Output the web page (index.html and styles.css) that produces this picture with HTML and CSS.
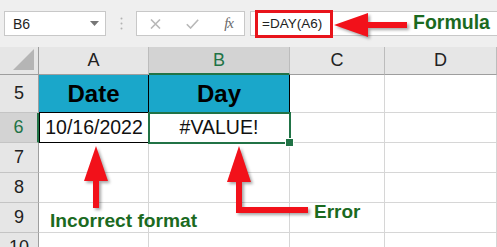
FILE: index.html
```html
<!DOCTYPE html>
<html lang="en">
<head>
    <meta charset="UTF-8">
    <title>DAY function error</title>
    <link rel="stylesheet" href="styles.css">
</head>
<body>
    <div class="sheet">
        <div class="toolbar">
            <div class="namebox">
                <span>B6</span>
                <svg class="drop" width="9" height="5" viewBox="0 0 9 5"><path d="M0 0h9L4.5 5z"/></svg>
            </div>
            <div class="grip">
                <svg width="3" height="13" viewBox="0 0 3 13"><circle cx="1.5" cy="1.5" r="1"/><circle cx="1.5" cy="6.5" r="1"/><circle cx="1.5" cy="11.5" r="1"/></svg>
            </div>
            <div class="fbuttons">
                <svg width="11" height="10" viewBox="0 0 11 10"><path d="M1 0.5l9 9M10 0.5l-9 9"/></svg>
                <svg width="13" height="10" viewBox="0 0 13 10"><path d="M0.8 5.2l3.8 3.8L12.2 0.8"/></svg>
                <span class="fx">fx</span>
            </div>
            <div class="fbar">
                <span class="formula">=DAY(A6)</span>
            </div>
        </div>

        <div class="grid">
            <div class="hd corner">
                <svg width="21" height="21" viewBox="0 0 21 21"><path d="M21 0v21H0z"/></svg>
            </div>
            <div class="hd col">A</div>
            <div class="hd col active">B</div>
            <div class="hd col">C</div>
            <div class="hd col">D</div>

            <div class="hd row">5</div>
            <div class="cell title">Date</div>
            <div class="cell title">Day</div>
            <div class="cell"></div>
            <div class="cell"></div>

            <div class="hd row active">6</div>
            <div class="cell value boxed">10/16/2022</div>
            <div class="cell value selected">#VALUE!</div>
            <div class="cell"></div>
            <div class="cell"></div>

            <div class="hd row">7</div>
            <div class="cell"></div>
            <div class="cell"></div>
            <div class="cell"></div>
            <div class="cell"></div>

            <div class="hd row">8</div>
            <div class="cell"></div>
            <div class="cell"></div>
            <div class="cell"></div>
            <div class="cell"></div>

            <div class="hd row">9</div>
            <div class="cell"></div>
            <div class="cell"></div>
            <div class="cell"></div>
            <div class="cell"></div>

            <div class="hd row">10</div>
            <div class="cell"></div>
            <div class="cell"></div>
            <div class="cell"></div>
            <div class="cell"></div>
        </div>

        <!-- callouts drawn over the sheet -->
        <svg class="arrows" width="497" height="247" viewBox="0 0 497 247">
            <polygon points="96,146 108,181 99,181 99,208 93,208 93,181 84,181"/>
            <polygon points="239,146 251,182 242,182 242,207 308,207 308,213 236,213 236,182 227,182"/>
            <polygon points="334,25 368,13 368,22 407,22 407,28 368,28 368,37"/>
        </svg>
        <span class="note note-formula">Formula</span>
        <span class="note note-format">Incorrect format</span>
        <span class="note note-error">Error</span>
    </div>
</body>
</html>
```

FILE: styles.css
```css
* {
    margin: 0;
    padding: 0;
    box-sizing: border-box;
}

body {
    background: #fff;
    font-family: "Liberation Sans", Arial, sans-serif;
    color: #1e1e1e;
    overflow: hidden;
}

.sheet {
    position: relative;
    width: 497px;
    height: 247px;
    overflow: hidden;
}

/* ---- formula bar ---- */

.toolbar {
    display: flex;
    height: 47px;
    padding-top: 11px;
    background: #efefef;
}

.namebox {
    display: flex;
    align-items: center;
    justify-content: space-between;
    width: 102px;
    height: 25px;
    margin-left: 4px;
    padding: 0 6px 0 8px;
    background: #fff;
    border: 1px solid #c8c8c8;
    font-size: 14px;
}

.namebox .drop {
    fill: #767676;
}

.grip {
    display: flex;
    align-items: center;
    justify-content: center;
    width: 30px;
    height: 25px;
}

.grip svg {
    fill: #b2b2b2;
}

.fbuttons {
    display: flex;
    align-items: center;
    justify-content: space-between;
    width: 109px;
    height: 25px;
    padding: 0 11px 0 13px;
    background: #fff;
    border: 1px solid #c8c8c8;
}

.fbuttons svg {
    fill: none;
    stroke: #b8b8b8;
    stroke-width: 1.6;
}

.fx {
    font-family: "Liberation Serif", serif;
    font-style: italic;
    font-size: 15px;
    color: #6a6a6a;
    letter-spacing: -1px;
}

.fbar {
    display: flex;
    align-items: center;
    flex: 1;
    height: 25px;
    margin-left: 5px;
    padding-left: 4px;
    background: #fff;
    border: 1px solid #c8c8c8;
    border-right: none;
}

.formula {
    display: flex;
    align-items: center;
    width: 78px;
    height: 28px;
    padding-left: 4px;
    border: 3px solid #e8141b;
    font-size: 13.5px;
    color: #222;
}

/* ---- grid ---- */

.grid {
    display: grid;
    grid-template-columns: 39px 110px 141px 95px 112px;
    grid-template-rows: 28px 38px 30px 30px 30px 30px 30px;
}

.hd {
    display: flex;
    align-items: center;
    justify-content: center;
    background: #e6e6e6;
    font-size: 18px;
    color: #222;
}

.hd.col {
    border-right: 1px solid #bcbcbc;
    border-bottom: 1px solid #9e9e9e;
}

.hd.row {
    border-right: 1px solid #9e9e9e;
    border-bottom: 1px solid #c4c4c4;
}

.hd.corner {
    align-items: flex-end;
    justify-content: flex-end;
    padding: 0 4px 4px 0;
    border-right: 1px solid #9e9e9e;
    border-bottom: 1px solid #9e9e9e;
}

.corner svg {
    fill: #b5b5b5;
}

.hd.active {
    background: #d3d3d3;
    color: #217346;
}

.hd.col.active {
    border-bottom: 2px solid #217346;
}

.hd.row.active {
    border-right: 2px solid #217346;
}

.cell {
    display: flex;
    align-items: center;
    justify-content: center;
    border-right: 1px solid #d6d6d6;
    border-bottom: 1px solid #d6d6d6;
    white-space: nowrap;
}

.cell.title {
    background: #1aa7ca;
    border-right: 1px solid #000;
    border-bottom: 1px solid #000;
    font-size: 24px;
    font-weight: bold;
    color: #000;
}

.cell.value {
    font-size: 19.5px;
    color: #111;
}

.cell.boxed {
    border-left: 1px solid #000;
    border-right: 1px solid #000;
    border-bottom: 1px solid #000;
}

.cell.selected {
    position: relative;
}

.cell.selected::before {
    content: "";
    position: absolute;
    top: -1px;
    left: -1px;
    right: -2px;
    bottom: -2px;
    border: 2px solid #217346;
}

.cell.selected::after {
    content: "";
    position: absolute;
    right: -5px;
    bottom: -5px;
    width: 7px;
    height: 7px;
    background: #217346;
    border: 1px solid #fff;
}

/* ---- callouts ---- */

.arrows {
    position: absolute;
    top: 0;
    left: 0;
    fill: #f2111a;
    filter: drop-shadow(2px 2px 1.5px rgba(0, 0, 0, 0.35));
    pointer-events: none;
}

.note {
    position: absolute;
    font-weight: bold;
    line-height: 1;
    color: #1b6a1f;
    white-space: nowrap;
}

.note-formula {
    top: 13px;
    left: 413px;
    font-size: 19.5px;
}

.note-format {
    top: 211px;
    left: 50px;
    font-size: 19.2px;
}

.note-error {
    top: 202px;
    left: 314px;
    font-size: 19px;
}
```
